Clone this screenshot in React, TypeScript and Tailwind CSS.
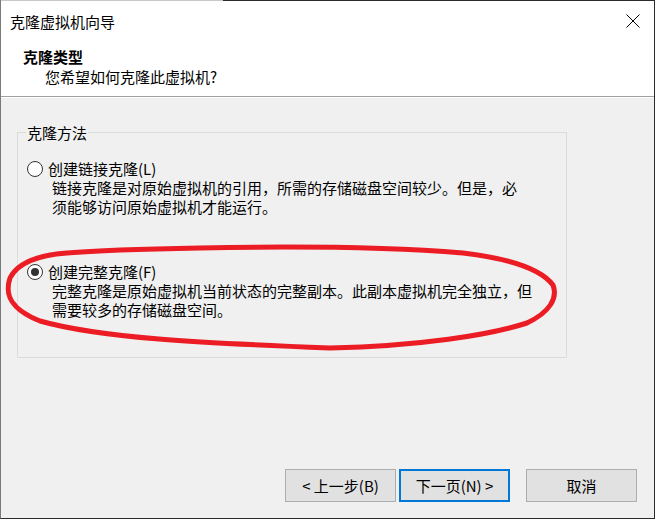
import React from "react";

const font = "font-['Noto_Sans_CJK_SC',_'Noto_Sans',_sans-serif]";

const Radio: React.FC<{ checked?: boolean }> = ({ checked }) => (
  <span className="flex h-[16px] w-[16px] items-center justify-center rounded-full border border-[#333333] bg-white">
    {checked && <span className="h-[8px] w-[8px] rounded-full bg-[#333333]" />}
  </span>
);

const Button: React.FC<{ label: string; focused?: boolean }> = ({ label, focused }) => (
  <button
    className={
      focused
        ? "flex h-[33px] w-[111px] items-center justify-center border-2 border-[#0078d7] bg-[#e1e1e1] text-[15px] text-black"
        : "flex h-[33px] w-[111px] items-center justify-center border border-[#adadad] bg-[#e1e1e1] text-[15px] text-black"
    }
  >
    {label}
  </button>
);

export default function App() {
  return (
    <div className={`relative flex h-[519px] w-[655px] flex-col border-b border-l border-r border-b-[#2b2b2b] border-l-[#7a7a7a] border-r-[#2b2b2b] bg-[#f0f0f0] ${font} text-[15px] leading-[19px] text-black`}>
      {/* header */}
      <div className="flex flex-col bg-white">
        <div className="flex h-[1px]">
          <div className="w-[222px] bg-[#c8c8c8]" />
          <div className="flex-1 bg-[#2b2b2b]" />
        </div>
        <div className="flex h-[40px] items-center justify-between pl-[9px] pr-[14px]">
          <span>克隆虚拟机向导</span>
          <svg width="14" height="14" viewBox="0 0 14 14">
            <path d="M0.5 0.5 L13.5 13.5 M13.5 0.5 L0.5 13.5" stroke="#000" strokeWidth="1" />
          </svg>
        </div>
        <div className="mt-[6px] pl-[22px] font-bold leading-[20px]">克隆类型</div>
        <div className="mb-[9px] pl-[44px] leading-[20px]">您希望如何克隆此虚拟机?</div>
        <div className="h-[1px] bg-[#a0a0a0]" />
        <div className="h-[1px] bg-white" />
      </div>

      {/* body */}
      <div className="flex flex-1 flex-col">
        <div className="relative ml-[16px] mt-[34px] h-[226px] w-[550px] border border-[#dcdcdc] pl-[9px] pt-[26px]">
          <span className="absolute left-[8px] top-[-10px] bg-[#f0f0f0] px-[1px]">克隆方法</span>
          <div className="flex items-center gap-[5px]">
            <Radio />
            <span>创建链接克隆(L)</span>
          </div>
          <div className="pl-[25px]">
            <p>链接克隆是对原始虚拟机的引用，所需的存储磁盘空间较少。但是，必</p>
            <p>须能够访问原始虚拟机才能运行。</p>
          </div>
          <div className="mt-[46px] flex items-center gap-[5px]">
            <Radio checked />
            <span>创建完整克隆(F)</span>
          </div>
          <div className="pl-[25px]">
            <p>完整克隆是原始虚拟机当前状态的完整副本。此副本虚拟机完全独立，但</p>
            <p>需要较多的存储磁盘空间。</p>
          </div>
        </div>

        <div className="mt-[111px] flex justify-end pr-[17px]">
          <Button label="< 上一步(B)" />
          <div className="ml-[3px]">
            <Button label="下一页(N) >" focused />
          </div>
          <div className="ml-[16px]">
            <Button label="取消" />
          </div>
        </div>
      </div>

      {/* red hand-drawn mark */}
      <svg className="pointer-events-none absolute left-[-1px] top-0" width="655" height="519" viewBox="0 0 655 519">
        <path
          d="M 67 253 C 40 255, 18 262, 10 278 C 4 296, 12 310, 40 321 C 100 338, 200 343, 330 348 C 420 346, 490 335, 527 323 C 550 312, 558 298, 553 285 C 540 268, 505 258, 463 253 C 400 248, 300 246, 200 248 C 140 249, 90 251, 67 253 Z"
          fill="none"
          stroke="#ec1c24"
          strokeWidth="5"
          strokeLinecap="round"
          strokeLinejoin="round"
        />
      </svg>
    </div>
  );
}
